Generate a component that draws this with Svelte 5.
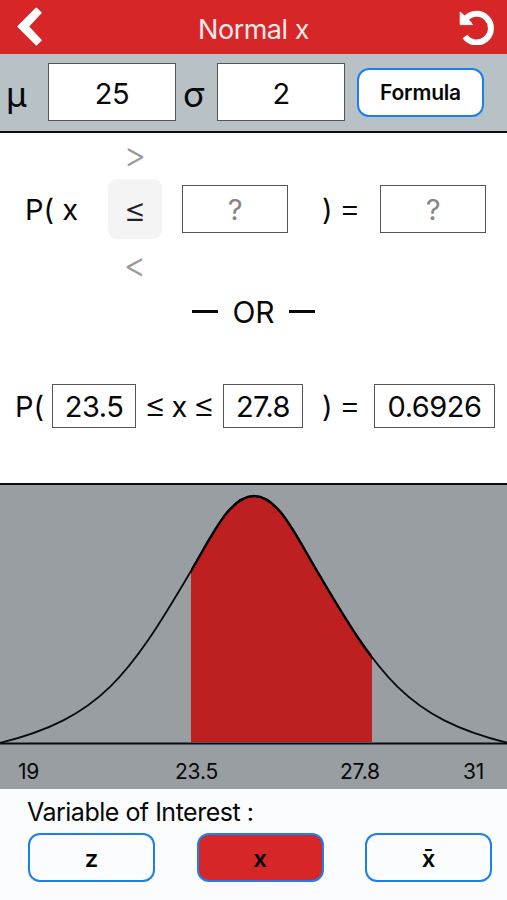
<script>
  let mu = $state("25");
  let sigma = $state("2");
  let lower = $state("23.5");
  let upper = $state("27.8");
  let variable = $state("x");

  const operators = [">", "≤", "<"];
  const variables = ["z", "x", "x̄"];

  // bell curve in chart pixels, mean at the middle
  const curve =
    "M0 258 C100 233 129 191.4 191 86 C213 49 230 11 254 11 C278 11 295 49 317 86 C379 191.4 407 233 508 258";
</script>

<div class="app">
  <header>
    <button class="icon" aria-label="Back">
      <svg width="28" height="42" viewBox="0 0 28 42">
        <path
          d="M21.3 2.3 L26 6.8 L13.2 20.5 L26 34.2 L21.3 38.7 L3 20.5 Z"
          fill="#fff"
          stroke="#fff"
          stroke-width="1.5"
          stroke-linejoin="round" />
      </svg>
    </button>
    <h1>Normal x</h1>
    <button class="icon" aria-label="Reset">
      <svg width="36" height="36" viewBox="0 0 36 36">
        <path d="M7 9.6 A14.3 14.3 0 1 1 6 27.5" fill="none" stroke="#fff" stroke-width="6" />
        <path d="M1.2 3 L1.2 15.6 L13.5 15.6 L10.5 11.5 L5 6.5 Z" fill="#fff" stroke="#fff" stroke-linejoin="round" />
      </svg>
    </button>
  </header>

  <section class="params">
    <span class="symbol mu">μ</span>
    <div class="box">{mu}</div>
    <span class="symbol sigma">σ</span>
    <div class="box">{sigma}</div>
    <button class="pill formula">Formula</button>
  </section>

  <main>
    <div class="row single">
      <span class="open">P( x</span>
      <div class="picker">
        {#each operators as op (op)}
          <span class:selected={op == "≤"}>{op}</span>
        {/each}
      </div>
      <div class="box empty">?</div>
      <span class="equals">) <b>=</b></span>
      <div class="box empty">?</div>
    </div>
    <div class="or"><i></i><span>OR</span><i></i></div>
    <div class="row between">
      <span class="open">P(</span>
      <div class="box low">{lower}</div>
      <span class="middle"><b>≤</b><span>x</span><b>≤</b></span>
      <div class="box high">{upper}</div>
      <span class="equals">) <b>=</b></span>
      <div class="box result">0.6926</div>
    </div>
  </main>

  <section class="chart">
    <svg width="507" height="262" viewBox="0 0 507 262">
      <defs>
        <clipPath id="area"><rect x="191" y="0" width="181" height="257" /></clipPath>
      </defs>
      <path d={curve} fill="none" stroke="#080a0c" stroke-width="1.8" />
      <g clip-path="url(#area)">
        <path d={curve} fill="#be1f21" stroke="#000" stroke-width="2.4" />
      </g>
      <path d="M0 258.6 H507" stroke="#0a0c0e" stroke-width="2" />
    </svg>
    <div class="labels">
      <span>19</span>
      <span>{lower}</span>
      <span>{upper}</span>
      <span>31</span>
    </div>
  </section>

  <footer>
    <p>Variable of Interest :</p>
    <div class="variables">
      {#each variables as v (v)}
        <button class="pill" class:active={v == variable} onclick={() => (variable = v)}>{v}</button>
      {/each}
    </div>
  </footer>
</div>

<style>
  :global(body) {
    margin: 0;
  }

  .app {
    width: 507px;
    height: 900px;
    display: flex;
    flex-direction: column;
    overflow: hidden;
    background: #fff;
    color: #080808;
    font-family: Inter, "Liberation Sans", sans-serif;
    font-size: 29px;
    font-feature-settings: "calt" 0;
    white-space: nowrap;
  }

  .app * {
    box-sizing: border-box;
  }

  button {
    font-family: inherit;
    color: inherit;
    padding: 0;
  }

  b {
    font-size: 34px;
    font-weight: 350;
    line-height: 30px;
  }

  header {
    height: 54px;
    flex: none;
    display: flex;
    align-items: center;
    justify-content: space-between;
    padding: 0 12px 0 15px;
    background: #d62627;
  }

  .icon {
    display: flex;
    border: 0;
    background: none;
  }

  h1 {
    margin: 4px 0 0 5px;
    font-size: 27px;
    font-weight: 400;
    letter-spacing: -0.5px;
    color: #fbeaea;
  }

  .params {
    height: 79px;
    flex: none;
    display: flex;
    align-items: center;
    padding-bottom: 1px;
    background: #b8c2c6;
    border-bottom: 2px solid #0b0d0e;
  }

  .box {
    display: flex;
    align-items: center;
    justify-content: center;
    flex: none;
    border: 1px solid #555;
    background: #fff;
    letter-spacing: -0.5px;
  }

  .params .box {
    width: 128px;
    height: 58px;
    padding-top: 2px;
  }

  .symbol {
    font-size: 35px;
    padding-top: 3px;
  }

  .mu {
    width: 48px;
    padding-left: 6px;
  }

  .sigma {
    width: 41px;
    padding-left: 7px;
  }

  .pill {
    width: 127px;
    height: 49px;
    border: 2px solid #1c7fee;
    border-radius: 12px;
    background: #fff;
    font-size: 22px;
    font-weight: 600;
  }

  .formula {
    margin-left: 12px;
    font-size: 21px;
    letter-spacing: -0.2px;
  }

  main {
    height: 350px;
    flex: none;
    display: flex;
    flex-direction: column;
  }

  .row {
    display: flex;
    align-items: center;
  }

  .single {
    height: 152px;
  }

  .single .open {
    width: 108px;
    padding-left: 25px;
  }

  .picker {
    width: 54px;
    display: flex;
    flex-direction: column;
    align-items: center;
    margin-right: 20px;
    color: #999;
    font-size: 35px;
    font-weight: 300;
    line-height: 42px;
  }

  .picker span:first-child {
    padding-bottom: 4px;
  }

  .picker span:last-child {
    padding-top: 4px;
  }

  .picker .selected {
    width: 54px;
    line-height: 60px;
    text-align: center;
    border-radius: 9px;
    background: #f4f4f4;
    color: #222;
  }

  .empty {
    width: 106px;
    height: 48px;
    color: #858585;
  }

  .equals {
    word-spacing: -2px;
  }

  .single .equals {
    width: 92px;
    padding-left: 34px;
  }

  .or {
    height: 53px;
    display: flex;
    align-items: center;
    justify-content: center;
    gap: 14px;
  }

  .or span {
    font-size: 30px;
  }

  .or i {
    width: 26px;
    height: 3px;
    background: #080808;
  }

  .between {
    height: 136px;
  }

  .between .open {
    width: 52px;
    padding-left: 15px;
  }

  .between .box {
    height: 44px;
  }

  .low {
    width: 84px;
  }

  .middle {
    width: 87px;
    display: flex;
    align-items: baseline;
    justify-content: space-between;
    padding: 0 8px;
  }

  .high {
    width: 80px;
  }

  .between .equals {
    width: 71px;
    padding-left: 19px;
  }

  .result {
    width: 121px;
  }

  .chart {
    height: 306px;
    flex: none;
    border-top: 2px solid #0a0c0e;
    background: #999ea3;
  }

  .chart svg {
    display: block;
  }

  .labels {
    display: grid;
    grid-template-columns: 157px 165px 123px auto;
    padding: 11px 0 0 18px;
    font-size: 21px;
    letter-spacing: -0.2px;
    line-height: 28px;
  }

  footer {
    flex: 1;
    background: #fafcfd;
  }

  p {
    margin: 6px 0 0 27px;
    font-size: 25px;
    line-height: 34px;
    letter-spacing: -0.5px;
  }

  .variables {
    display: flex;
    justify-content: space-between;
    padding: 4px 15px 0 28px;
  }

  .variables .pill {
    padding-top: 2px;
    background: #fafcfd;
    font-size: 24px;
  }

  .variables .pill.active {
    background: #d62627;
  }
</style>
